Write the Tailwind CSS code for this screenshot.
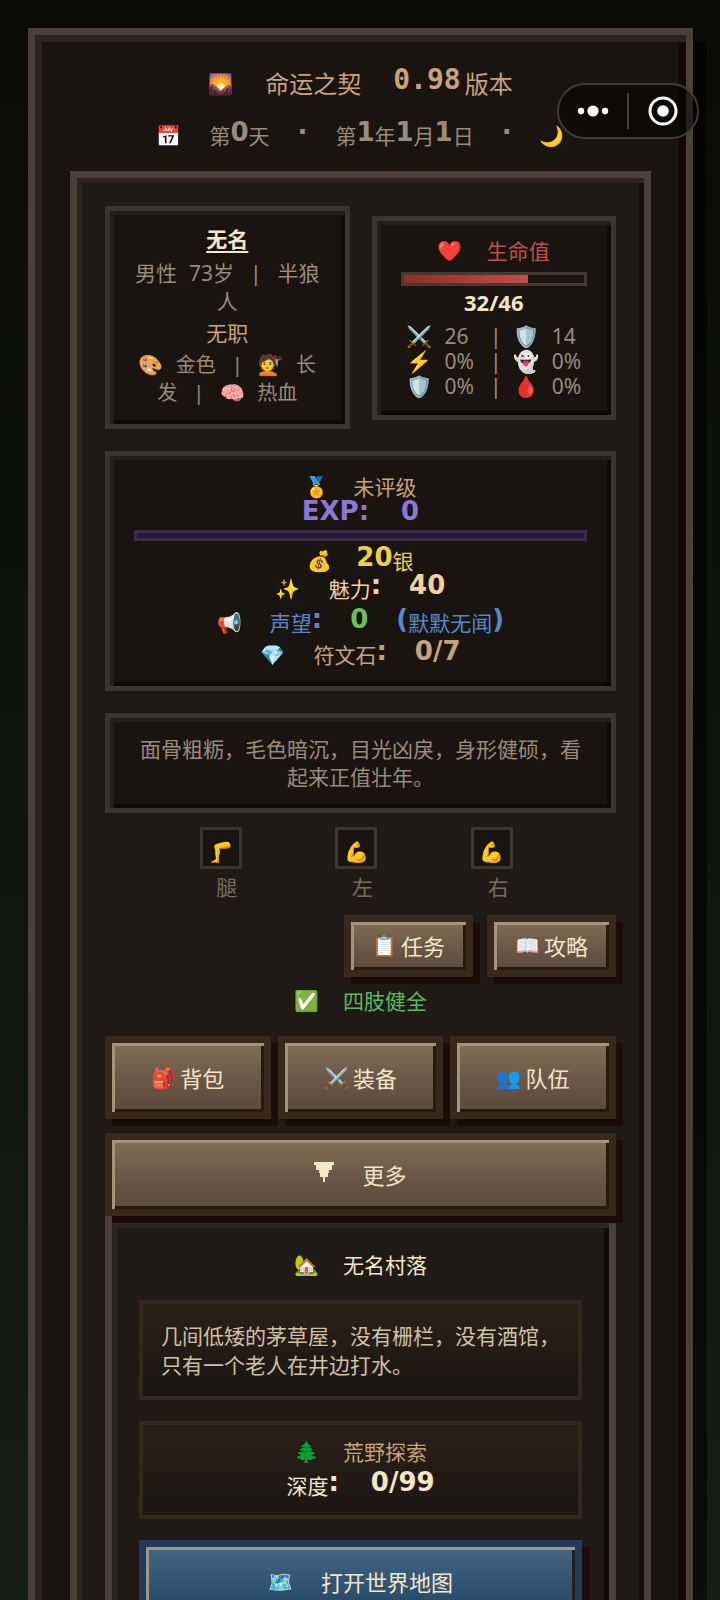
<!DOCTYPE html>
<html lang="zh-CN">
<head>
    <meta charset="UTF-8">
    <meta name="viewport" content="width=device-width, initial-scale=1.0">
    <title>命运之契</title>
    <script src="https://cdn.jsdelivr.net/npm/@tailwindcss/browser@4"></script>
    <style>
        body {
            font-family: 'Noto Sans', 'Noto Sans CJK SC', 'Noto Color Emoji', sans-serif;
        }
    </style>
</head>
<body class="bg-[#141b13] text-[20px] leading-7 text-[#9b8b7a]">
    <div class="relative min-h-screen bg-linear-to-b from-[#090b07] to-[#172016] pt-7 pr-[27px] pl-7">

        <!-- Mini program capsule -->
        <div class="absolute top-[83px] right-[21px] z-20 flex h-14 w-[142px] items-center rounded-full border-2 border-[#3f3b39] bg-black/50">
            <button type="button" aria-label="更多选项" class="flex h-full flex-1 items-center justify-center">
                <svg class="h-3 w-8" viewBox="0 0 32 12" fill="#fff">
                    <circle cx="4" cy="6" r="3.2"/>
                    <circle cx="16" cy="6" r="5.6"/>
                    <circle cx="28" cy="6" r="3.2"/>
                </svg>
            </button>
            <div class="h-9 w-0.5 bg-[#45413f]"></div>
            <button type="button" aria-label="关闭" class="flex h-full flex-1 items-center justify-center">
                <svg class="size-[30px]" viewBox="0 0 30 30">
                    <circle cx="15" cy="15" r="13" fill="none" stroke="#fff" stroke-width="3"/>
                    <circle cx="15" cy="15" r="5.8" fill="#fff"/>
                </svg>
            </button>
        </div>

        <div class="border-[7px] border-[#4a4037] bg-[#1a1411] px-[35px] pt-[31px] pb-8 shadow-[inset_7px_7px_0_#2b2420,inset_-7px_-7px_0_#0e0907,14px_14px_0_rgba(0,0,0,0.55)]">

            <!-- Title and date -->
            <header>
                <h1 class="flex h-9 items-center justify-center gap-8 text-2xl text-[#c8a27a]">
                    <span class="text-[20px]">🌄</span>
                    <span>命运之契</span>
                    <span class="flex items-center gap-1"><b class="pb-2 font-['DejaVu_Sans_Mono'] text-[28px]">0.98</b>版本</span>
                </h1>
                <div class="mt-4 flex h-9 items-center justify-center gap-7 text-[21px]">
                    <span class="text-[20px]">📅</span>
                    <span class="flex items-center">第<b class="pb-2 font-['DejaVu_Sans'] text-[26px]">0</b>天</span>
                    <b class="pb-2 font-['DejaVu_Sans'] text-[26px]">·</b>
                    <span class="flex items-center">第<b class="pb-2 font-['DejaVu_Sans'] text-[26px]">1</b>年<b class="pb-2 font-['DejaVu_Sans'] text-[26px]">1</b>月<b class="pb-2 font-['DejaVu_Sans'] text-[26px]">1</b>日</span>
                    <b class="pb-2 font-['DejaVu_Sans'] text-[26px]">·</b>
                    <span class="text-[20px]">🌙</span>
                </div>
            </header>

            <main class="mt-[17px] border-[7px] border-[#4a4037] bg-[#1f1a15] px-7 pt-7 pb-8 shadow-[inset_5px_5px_0_#2b2520,inset_-5px_-5px_0_#110c0a]">

                <!-- Character and health -->
                <div class="grid grid-cols-2 items-center gap-[22px]">
                    <section class="border-[5px] border-[#3a3531] bg-[#1a1411] px-5 pt-3.5 pb-4 text-center shadow-[inset_4px_4px_0_#231e1a,inset_-4px_-4px_0_#0f0a08]">
                        <h2 class="mb-1.5 text-[21px] font-bold text-[#f5e6c8] underline underline-offset-4">无名</h2>
                        <p class="text-[21px]">男性<span class="ml-3">73岁</span><span class="mx-4">|</span>半狼人</p>
                        <p class="my-1 text-[21px] text-[#c8a27a]">无职</p>
                        <p class="pb-px"><span class="mr-3">🎨</span>金色<span class="mx-4">|</span><span class="mr-3">💇</span>长发<span class="mx-4">|</span><span class="mr-3">🧠</span>热血</p>
                    </section>

                    <section class="border-[5px] border-[#3a3531] bg-[#1a1411] px-6 pt-4 pb-4 text-center shadow-[inset_4px_4px_0_#231e1a,inset_-4px_-4px_0_#0f0a08]">
                        <h2 class="flex items-center justify-center gap-6 text-[21px] text-[#c0504d]"><span class="text-[20px]">❤️</span>生命值</h2>
                        <div class="mt-[7px] h-3.5 border-3 border-[#463a2d] bg-[#1c1410]">
                            <div class="h-full bg-linear-to-r from-[#8b2e2e] to-[#c84b4b]" style="width: 69%"></div>
                        </div>
                        <p class="text-[22px] leading-8 font-bold text-[#f5e6c8]">32/46</p>
                        <dl class="mt-1.5 grid grid-cols-[auto_auto_auto_auto_auto] justify-center gap-x-3 text-left text-[21px] leading-[25px]">
                            <dt>⚔️</dt><dd>26</dd><dd class="pl-1">|</dd><dt>🛡️</dt><dd>14</dd>
                            <dt>⚡</dt><dd>0%</dd><dd class="pl-1">|</dd><dt>👻</dt><dd>0%</dd>
                            <dt>🛡️</dt><dd>0%</dd><dd class="pl-1">|</dd><dt>🩸</dt><dd>0%</dd>
                        </dl>
                    </section>
                </div>

                <!-- Rank, money and reputation -->
                <section class="mt-[22px] flex flex-col items-center border-[5px] border-[#3a3531] bg-[#1a1411] px-6 pt-[19px] pb-[19px] text-[21px] shadow-[inset_4px_4px_0_#231e1a,inset_-4px_-4px_0_#0f0a08]">
                    <p class="flex h-6 items-center gap-6 text-[#c8a27a]"><span class="text-[20px]">🏅</span>未评级</p>
                    <p class="flex h-6 items-center gap-8 font-['DejaVu_Sans'] text-[26px] font-bold text-[#8b78d0]"><span>EXP:</span><span>0</span></p>
                    <div class="mt-[7px] h-[11px] w-full border-3 border-[#3b2c45] bg-[#27173a]"></div>
                    <p class="mt-1.5 flex h-7 items-center gap-6 text-[#f0d040]"><span class="text-[20px]">💰</span><span class="flex items-center"><b class="pb-2 font-['DejaVu_Sans'] text-[26px]">20</b>银</span></p>
                    <p class="flex h-7 items-center gap-7 text-[#f5d0a0]"><span class="text-[20px]">✨</span><span class="flex items-center">魅力<b class="pb-2 font-['DejaVu_Sans'] text-[26px]">:</b></span><b class="pb-2 font-['DejaVu_Sans'] text-[26px]">40</b></p>
                    <p class="flex h-10 items-center gap-7 text-[#5888c8]"><span class="text-[20px]">📢</span><span class="flex items-center">声望<b class="pb-2 font-['DejaVu_Sans'] text-[26px]">:</b></span><b class="pb-2 font-['DejaVu_Sans'] text-[26px] text-[#6ac05a]">0</b><span class="flex items-center"><b class="pb-2 font-['DejaVu_Sans'] text-[26px]">(</b>默默无闻<b class="pb-2 font-['DejaVu_Sans'] text-[26px]">)</b></span></p>
                    <p class="flex h-6 items-center gap-7 text-[#c8a27a]"><span class="text-[20px]">💎</span><span class="flex items-center">符文石<b class="pb-2 font-['DejaVu_Sans'] text-[26px]">:</b></span><b class="pb-2 font-['DejaVu_Sans'] text-[26px]">0/7</b></p>
                </section>

                <section class="mt-[22px] border-[5px] border-[#3a3531] bg-[#1a1411] px-6 pt-[17px] pb-[17px] text-center text-[21px] shadow-[inset_4px_4px_0_#231e1a,inset_-4px_-4px_0_#0f0a08]">
                    <p>面骨粗粝，毛色暗沉，目光凶戾，身形健硕，看起来正值壮年。</p>
                </section>

                <!-- Limbs -->
                <ul class="mt-3.5 grid grid-cols-3 pr-14 pl-12 text-[21px] text-[#7a6b5d]">
                    <li class="flex flex-col items-center">
                        <div class="flex size-[42px] items-end justify-center border-3 border-[#3a3531] bg-[#1a1411] text-[20px]">🦵</div>
                        <span class="mt-1 ml-3">腿</span>
                    </li>
                    <li class="flex flex-col items-center">
                        <div class="flex size-[42px] items-end justify-center border-3 border-[#3a3531] bg-[#1a1411] text-[20px]">💪</div>
                        <span class="mt-1 ml-3">左</span>
                    </li>
                    <li class="flex flex-col items-center">
                        <div class="flex size-[42px] items-end justify-center border-3 border-[#3a3531] bg-[#1a1411] text-[20px]">💪</div>
                        <span class="mt-1 ml-3">右</span>
                    </li>
                </ul>

                <div class="mt-3.5 flex justify-end gap-3.5">
                    <button type="button" class="flex h-[62px] w-[129px] items-center justify-center gap-1 border-[7px] border-[#38291c] bg-linear-to-b from-[#88745a] via-[#6b5848] to-[#5a473a] bg-origin-border text-[22px] text-[#f5e6c8] shadow-[inset_3px_3px_0_#a8937a,inset_-3px_-3px_0_#2a1a0c,7px_7px_0_#1b0c09]"><span class="text-[20px]">📋</span>任务</button>
                    <button type="button" class="flex h-[62px] w-[129px] items-center justify-center gap-1 border-[7px] border-[#38291c] bg-linear-to-b from-[#88745a] via-[#6b5848] to-[#5a473a] bg-origin-border text-[22px] text-[#f5e6c8] shadow-[inset_3px_3px_0_#a8937a,inset_-3px_-3px_0_#2a1a0c,7px_7px_0_#1b0c09]"><span class="text-[20px]">📖</span>攻略</button>
                </div>

                <p class="mt-2.5 flex items-center justify-center gap-6 text-[21px] text-[#5cb85c]"><span class="text-[20px]">✅</span>四肢健全</p>

                <!-- Menu -->
                <nav class="relative z-10 mt-[21px] grid grid-cols-3 gap-x-[7px] gap-y-3.5">
                    <button type="button" class="flex h-[83px] items-center justify-center gap-1 border-[7px] border-[#38291c] bg-linear-to-b from-[#88745a] via-[#6b5848] to-[#5a473a] bg-origin-border text-[22px] text-[#f5e6c8] shadow-[inset_3px_3px_0_#a8937a,inset_-3px_-3px_0_#2a1a0c,7px_7px_0_#1b0c09]"><span class="text-[20px]">🎒</span>背包</button>
                    <button type="button" class="flex h-[83px] items-center justify-center gap-1 border-[7px] border-[#38291c] bg-linear-to-b from-[#88745a] via-[#6b5848] to-[#5a473a] bg-origin-border text-[22px] text-[#f5e6c8] shadow-[inset_3px_3px_0_#a8937a,inset_-3px_-3px_0_#2a1a0c,7px_7px_0_#1b0c09]"><span class="text-[20px]">⚔️</span>装备</button>
                    <button type="button" class="flex h-[83px] items-center justify-center gap-1 border-[7px] border-[#38291c] bg-linear-to-b from-[#88745a] via-[#6b5848] to-[#5a473a] bg-origin-border text-[22px] text-[#f5e6c8] shadow-[inset_3px_3px_0_#a8937a,inset_-3px_-3px_0_#2a1a0c,7px_7px_0_#1b0c09]"><span class="text-[20px]">👥</span>队伍</button>
                    <button type="button" class="col-span-3 flex h-[83px] items-center justify-center gap-7 border-[7px] border-[#38291c] bg-linear-to-b from-[#88745a] via-[#6b5848] to-[#5a473a] bg-origin-border text-[22px] text-[#f5e6c8] shadow-[inset_3px_3px_0_#a8937a,inset_-3px_-3px_0_#2a1a0c,7px_7px_0_#1b0c09]">
                        <svg class="mb-1.5 size-5" viewBox="0 0 20 20" fill="currentColor" shape-rendering="crispEdges">
                            <path d="M0 0h20v3h-2v5h-3v3h-1v4h-3v5H9v-5H6v-4H5V8H2V3H0z"/>
                        </svg>
                        更多
                    </button>
                </nav>

                <!-- Current place -->
                <section class="border-[7px] border-[#4a4037] bg-[#1f1a15] px-[27px] pt-7 pb-8 shadow-[inset_5px_5px_0_#2b2520,inset_-5px_-5px_0_#110c0a]">
                    <h2 class="flex items-center justify-center gap-6 text-[21px] text-[#f5e6c8]"><span class="text-[20px]">🏡</span>无名村落</h2>

                    <div class="mt-[21px] border-[4px] border-[#33281c] bg-linear-to-b from-[#2b2016] to-[#1a1612] pt-[18px] pr-3 pb-4 pl-[18px] text-[21px] leading-[29px] text-[#cfc0a8]">
                        <p>几间低矮的茅草屋，没有栅栏，没有酒馆，只有一个老人在井边打水。</p>
                    </div>

                    <div class="mt-[21px] flex flex-col items-center border-[4px] border-[#33281c] bg-linear-to-b from-[#2b2018] to-[#1a1612] pt-[11px] pb-[11px] text-[21px]">
                        <h3 class="flex h-8 items-center gap-6 text-[#c8a27a]"><span class="text-[20px]">🌲</span>荒野探索</h3>
                        <p class="flex h-9 items-center gap-8 text-[#f5e6c8]"><span class="flex items-center">深度<b class="pb-2 font-['DejaVu_Sans'] text-[26px]">:</b></span><b class="pb-2 font-['DejaVu_Sans'] text-[26px]">0/99</b></p>
                    </div>

                    <button type="button" class="mt-[21px] flex h-[83px] w-full items-center justify-center gap-7 border-[7px] border-[#243a5c] bg-linear-to-b from-[#476a88] to-[#1f4060] bg-origin-border text-[22px] text-[#f5e6c8] shadow-[inset_3px_3px_0_#a09684,inset_-3px_-3px_0_#2a1f18,7px_7px_0_#1b0c09]"><span class="text-[20px]">🗺️</span>打开世界地图</button>
                </section>
            </main>
        </div>
    </div>
</body>
</html>
